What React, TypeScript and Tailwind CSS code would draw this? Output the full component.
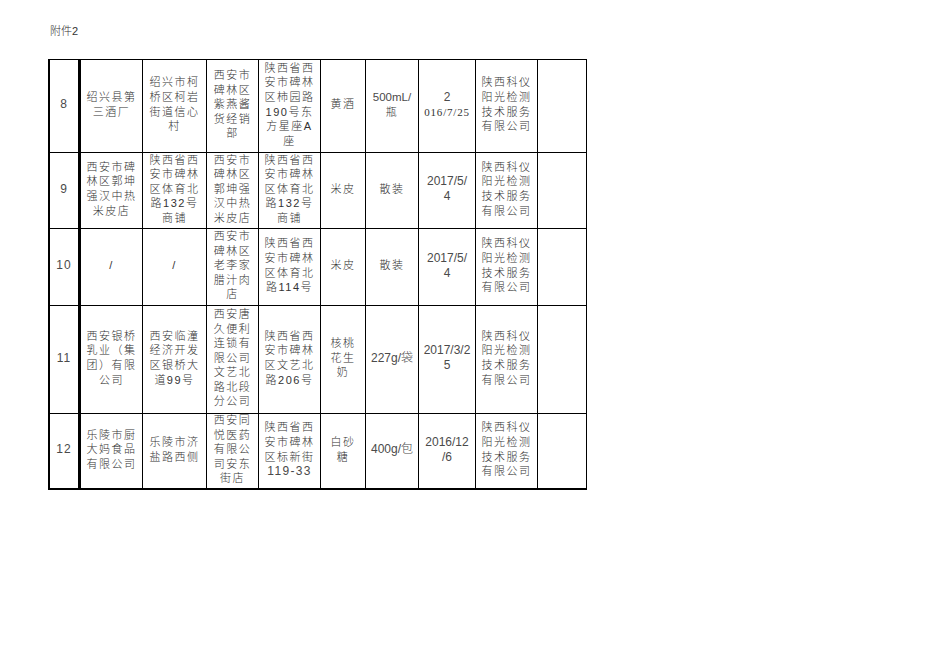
import React from "react";

type Line = string | { t: string; c: string };
type Cell = { lines: Line[]; cls?: string };

const CJK = "text-[11px] tracking-[1.5px]";
const NUM = "text-[12px] tracking-[1px] text-[#4a4a4a]";
const DATE = "text-[12px] tracking-normal text-[#4a4a4a]";

const lab = ["陕西科仪", "阳光检测", "技术服务", "有限公司"];

const rows: Cell[][] = [
  [
    { lines: ["8"], cls: NUM },
    { lines: ["绍兴县第", "三酒厂"] },
    { lines: ["绍兴市柯", "桥区柯岩", "街道信心", "村"] },
    { lines: ["西安市", "碑林区", "紫燕酱", "货经销", "部"] },
    { lines: ["陕西省西", "安市碑林", "区柿园路", "190号东", "方星座A", "座"] },
    { lines: ["黄酒"] },
    { lines: [{ t: "500mL/", c: "text-[11.5px] tracking-normal text-[#4a4a4a]" }, "瓶"] },
    {
      lines: [
        { t: "2", c: "text-[12px] tracking-normal text-[#4a4a4a]" },
        { t: "016/7/25", c: "text-[11px] tracking-[0.8px] font-['Liberation_Serif',serif]" },
      ],
    },
    { lines: lab },
    { lines: [] },
  ],
  [
    { lines: ["9"], cls: NUM },
    { lines: ["西安市碑", "林区郭坤", "强汉中热", "米皮店"] },
    { lines: ["陕西省西", "安市碑林", "区体育北", "路132号", "商铺"] },
    { lines: ["西安市", "碑林区", "郭坤强", "汉中热", "米皮店"] },
    { lines: ["陕西省西", "安市碑林", "区体育北", "路132号", "商铺"] },
    { lines: ["米皮"] },
    { lines: ["散装"] },
    { lines: ["2017/5/", "4"], cls: DATE },
    { lines: lab },
    { lines: [] },
  ],
  [
    { lines: ["10"], cls: NUM },
    { lines: ["/"] },
    { lines: ["/"] },
    { lines: ["西安市", "碑林区", "老李家", "腊汁肉", "店"] },
    { lines: ["陕西省西", "安市碑林", "区体育北", "路114号"] },
    { lines: ["米皮"] },
    { lines: ["散装"] },
    { lines: ["2017/5/", "4"], cls: DATE },
    { lines: lab },
    { lines: [] },
  ],
  [
    { lines: ["11"], cls: NUM },
    { lines: ["西安银桥", "乳业（集", "团）有限", "公司"] },
    { lines: ["西安临潼", "经济开发", "区银桥大", "道99号"] },
    { lines: ["西安唐", "久便利", "连锁有", "限公司", "文艺北", "路北段", "分公司"] },
    { lines: ["陕西省西", "安市碑林", "区文艺北", "路206号"] },
    { lines: ["核桃", "花生", "奶"] },
    { lines: ["227g/袋"], cls: DATE },
    { lines: ["2017/3/2", "5"], cls: DATE },
    { lines: lab },
    { lines: [] },
  ],
  [
    { lines: ["12"], cls: NUM },
    { lines: ["乐陵市厨", "大妈食品", "有限公司"] },
    { lines: ["乐陵市济", "盐路西侧"] },
    { lines: ["西安同", "悦医药", "有限公", "司安东", "街店"] },
    {
      lines: [
        "陕西省西",
        "安市碑林",
        "区标新街",
        { t: "119-33", c: "text-[12px] tracking-[1.3px] text-[#4a4a4a]" },
      ],
    },
    { lines: ["白砂", "糖"] },
    { lines: ["400g/包"], cls: DATE },
    { lines: ["2016/12", "/6"], cls: DATE },
    { lines: lab },
    { lines: [] },
  ],
];

export default function App() {
  return (
    <div className="w-[936px] h-[662px] bg-white font-['Liberation_Sans','Noto_Sans_CJK_SC',sans-serif] font-light text-[#333333] pt-[25px] pl-[50px]">
      <div className="text-[11px] leading-[13px]">附件2</div>
      <div className="mt-[21px] -ml-[2px] w-[539px] border-l-2 border-t border-black grid grid-cols-[31px_62px_64px_52px_62px_45px_53px_57px_62px_49px] grid-rows-[93px_76px_77px_108px_76px]">
        {rows.map((row, ri) =>
          row.map((cell, ci) => (
            <div
              key={ri + "-" + ci}
              className={
                "flex flex-col items-center justify-center text-center whitespace-nowrap leading-[14.6px] pb-[3px] border-black " +
                (ci === 0 ? "border-r-[3px] " : "border-r ") +
                (ri === rows.length - 1 ? "border-b-2 " : "border-b ") +
                (cell.cls ?? CJK)
              }
            >
              {cell.lines.map((l, li) =>
                typeof l === "string" ? (
                  <div key={li}>{l}</div>
                ) : (
                  <div key={li} className={l.c}>
                    {l.t}
                  </div>
                )
              )}
            </div>
          ))
        )}
      </div>
    </div>
  );
}
